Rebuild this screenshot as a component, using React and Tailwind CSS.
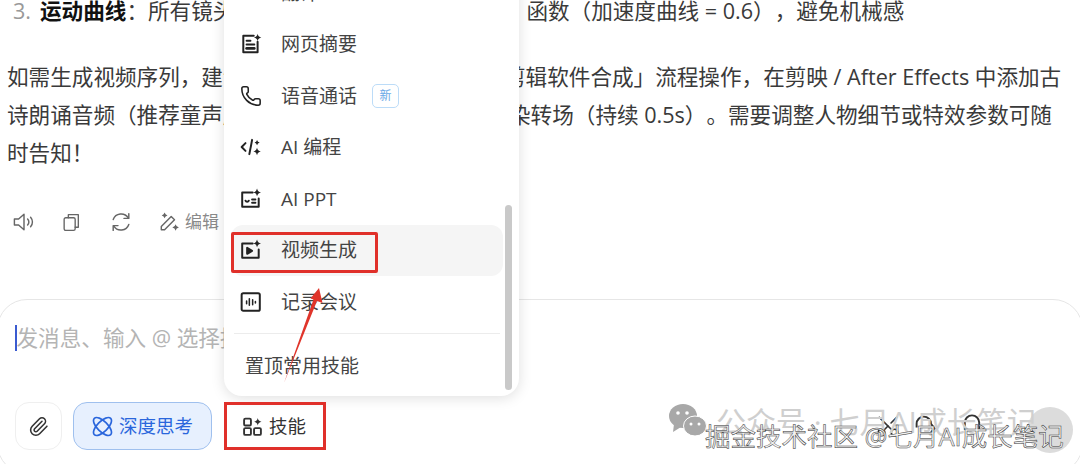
import React from "react";
import { Phone, Paperclip, Scissors } from "lucide-react";

const FONT = "[font-family:'Open_Sans','Noto_Sans_CJK_SC',sans-serif] [text-spacing-trim:space-all]";

const Spark = ({ x, y, s = 3.2 }) => (
  <path
    d={`M${x} ${y - s}Q${x + 0.5} ${y - 0.5} ${x + s} ${y}Q${x + 0.5} ${y + 0.5} ${x} ${y + s}Q${x - 0.5} ${y + 0.5} ${x - s} ${y}Q${x - 0.5} ${y - 0.5} ${x} ${y - s}Z`}
    fill="currentColor"
    stroke="none"
  />
);

const Icon = ({ children, className = "w-[22px] h-[22px]" }) => (
  <svg viewBox="0 0 20 20" fill="none" stroke="currentColor" strokeWidth="1.8" strokeLinecap="round" strokeLinejoin="round" className={className}>
    {children}
  </svg>
);

const PageIcon = () => (
  <Icon>
    <path d="M12.5 2.5H3v15h13V8" />
    <path d="M6 7h3.5M6 10.5h7" />
    <path d="M6 14h7" strokeWidth="2.4" />
    <Spark x={16} y={4} s={3.4} />
  </Icon>
);

const CodeIcon = () => (
  <Icon>
    <path d="M5 6.5 1.5 10 5 13.5" />
    <path d="M11 3.5 8.5 16.5" />
    <Spark x={15.5} y={6} s={2.4} />
    <Spark x={15.5} y={14} s={3.4} />
  </Icon>
);

const PptIcon = () => (
  <Icon>
    <path d="M11.5 4H2v13h15V9.5" />
    <path d="M5 11.5a1.6 1.6 0 0 0 3 0" />
    <path d="M11 10.5h3M11 13.5h3" />
    <Spark x={15.5} y={4} s={3.6} />
  </Icon>
);

const VideoIcon = () => (
  <Icon>
    <path d="M11.5 4H2v13h15V9.5" />
    <path d="M6.5 8v5.5l4.5-2.7z" fill="currentColor" />
    <Spark x={15.5} y={4} s={3.6} />
  </Icon>
);

const MeetingIcon = () => (
  <Icon>
    <rect x="1.5" y="2" width="16.5" height="16" rx="1.5" />
    <path d="M6 9v2.5M8.5 7v6M11.5 8v4.5M14 9.5v1.5" strokeWidth="1.4" />
  </Icon>
);

const TopIcon = () => (
  <Icon>
    <path d="M3 3h4M10 3h4M3 8h14" />
  </Icon>
);

const MENU = [
  { label: "翻译", icon: <TopIcon /> },
  { label: "网页摘要", icon: <PageIcon /> },
  { label: "语音通话", icon: <Phone className="w-[22px] h-[22px]" strokeWidth={1.7} />, isNew: true },
  { label: "AI 编程", icon: <CodeIcon /> },
  { label: "AI PPT", icon: <PptIcon /> },
  { label: "视频生成", icon: <VideoIcon />, active: true },
  { label: "记录会议", icon: <MeetingIcon /> },
];

const SkillMenu = () => (
  <div className="absolute left-[224px] top-[-33px] w-[295px] h-[429px] bg-white rounded-[18px] shadow-[0_2px_14px_rgba(0,0,0,0.13)] pl-[7px] pr-[16px]">
    {MENU.map((item) => (
      <div
        key={item.label}
        className={`flex items-center h-[51.5px] rounded-[12px] ${item.active ? "bg-[#f5f5f5]" : ""}`}
      >
        <span className="w-[50px] pl-[9px] text-[#222] flex items-center shrink-0">{item.icon}</span>
        <span className="text-[19px] text-[#444]">{item.label}</span>
        {item.isNew && (
          <span className="ml-[15px] w-[27px] h-[24px] flex items-center justify-center rounded-[5px] border border-[#bcdcf8] text-[12px] text-[#6aa9e6]">
            新
          </span>
        )}
      </div>
    ))}
    <div className="h-px bg-[#ececec] mt-[5px] mx-[3px]" />
    <div className="text-[19px] text-[#444] pl-[14px] mt-[18px]">置顶常用技能</div>
    <div className="absolute right-[7px] top-[238px] w-[7px] h-[185px] rounded-full bg-[#c9c9c9]" />
  </div>
);

const TextLine = ({ left, right, split = 504 }) => (
  <div className="flex h-[38px] items-center whitespace-nowrap">
    <span className="overflow-hidden shrink-0" style={{ width: split - 7 }}>{left}</span>
    <span>{right}</span>
  </div>
);

const ActionBar = () => (
  <div className="flex items-center h-[24px] mt-[38px] ml-[12px] text-[#666]">
    <Icon className="w-[24px] h-[24px]">
      <path d="M2 7.5h3.5L10 3.5v13l-4.5-4H2z" strokeWidth="1.2" />
      <path d="M13 7.5a3.5 3.5 0 0 1 0 5M15.5 6a6 6 0 0 1 0 8" strokeWidth="1.2" />
    </Icon>
    <Icon className="w-[21px] h-[21px] ml-[25px]">
      <rect x="3" y="5.5" width="10.5" height="12" rx="1.5" strokeWidth="1.3" />
      <path d="M7 5.5V2.5h9.5v12h-3" strokeWidth="1.3" />
    </Icon>
    <Icon className="w-[24px] h-[24px] ml-[27px]">
      <path d="M3.5 8a7 7 0 0 1 12.5-1.5M16.5 12a7 7 0 0 1-12.5 1.5" strokeWidth="1.2" />
      <path d="M16.5 3v4h-4M3.5 17v-4h4" strokeWidth="1.2" />
    </Icon>
    <Icon className="w-[22px] h-[22px] ml-[25px]">
      <path d="M3 14 12 5l3 3-9 9H3z" strokeWidth="1.3" />
      <Spark x={16} y={15} s={3} />
      <Spark x={6} y={4} s={2.6} />
    </Icon>
    <span className="text-[17px] ml-[5px] text-[#8a8a8a]">编辑</span>
  </div>
);

const Composer = () => (
  <div className="mx-[-3px] mt-[65px] h-[175px] rounded-[30px] border border-[#e6e6e6] pl-[17px] pr-[9px] pt-[22px]">
    <div className="flex items-center h-[32px]">
      <span className="w-[1.5px] h-[26px] bg-[#3b5bd0]" />
      <span className="text-[21.6px] text-[#b4b4b4] whitespace-nowrap">发消息、输入 @ 选择技能或 / 选择文件</span>
    </div>
    <div className="flex items-center mt-[48px] h-[48px]">
      <div className="w-[47px] h-[48px] rounded-[14px] border border-[#efefef] flex items-center justify-center text-[#333]">
        <Paperclip className="w-[21px] h-[21px]" strokeWidth={1.8} />
      </div>
      <div className="ml-[11px] w-[139px] h-[48px] rounded-[14px] border border-[#9fc0ee] bg-[#e7f0fe] flex items-center pl-[18px] text-[#2a66dc]">
        <svg viewBox="0 0 20 20" fill="none" stroke="currentColor" strokeWidth="1.6" className="w-[21px] h-[21px] shrink-0">
          <ellipse cx="10" cy="10" rx="11" ry="5" transform="rotate(45 10 10)" />
          <ellipse cx="10" cy="10" rx="11" ry="5" transform="rotate(-45 10 10)" />
        </svg>
        <span className="text-[18.5px] ml-[6px]">深度思考</span>
      </div>
      <div className="ml-[12px] w-[102px] h-[48px] flex items-center pl-[18px] text-[#333]">
        <Icon className="w-[21px] h-[21px] shrink-0">
          <rect x="2" y="2.5" width="6.5" height="6.5" rx="1.2" />
          <rect x="2" y="11.5" width="6.5" height="6.5" rx="1.2" />
          <rect x="11.5" y="11.5" width="6.5" height="6.5" rx="1.2" />
          <Spark x={15} y={5.5} s={3.6} />
        </Icon>
        <span className="text-[18.5px] ml-[6px]">技能</span>
      </div>
      <div className="ml-auto flex items-center text-[#333]">
        <Scissors className="w-[26px] h-[26px] rotate-[-90deg]" strokeWidth={1.5} />
        <svg viewBox="0 0 20 20" fill="none" stroke="currentColor" strokeWidth="1.6" className="w-[24px] h-[24px] ml-[12px] translate-y-[-1px]">
          <path d="M3 12V9a6 6 0 0 1 12 0l3 4-3 3" />
        </svg>
        <svg viewBox="0 0 20 20" fill="none" stroke="currentColor" strokeWidth="1.6" className="w-[24px] h-[24px] ml-[23px] translate-y-[-1px]">
          <path d="M4 14V8a6 6 0 0 1 12 0v6" />
        </svg>
        <span className="w-[46px] h-[46px] ml-[43px] rounded-full bg-[#dcdcdc] translate-y-[4px]" />
      </div>
    </div>
  </div>
);

const Annotations = () => (
  <>
    <div className="absolute left-[231px] top-[232px] w-[147px] h-[41px] border-[3px] border-[#e0302a] rounded-[2px]" />
    <div className="absolute left-[224px] top-[402px] w-[102px] h-[48px] border-[3px] border-[#e0302a]" />
    <svg className="absolute left-[275px] top-[280px] w-[55px] h-[110px]" viewBox="0 0 55 110">
      <path d="M44 8 47.5 23 42 21 9 103 38.5 19.5 35.5 18.5Z" fill="#e0352b" />
    </svg>
  </>
);

const Watermark = () => (
  <>
    <svg className="absolute left-[668px] top-[403px] w-[42px] h-[36px]" viewBox="0 0 42 36">
      <ellipse cx="15" cy="13" rx="14" ry="12" fill="#a8a8a8" />
      <path d="M6 21 5 29 13 24Z" fill="#a8a8a8" />
      <ellipse cx="27" cy="23" rx="11.5" ry="10" fill="#a8a8a8" stroke="#fff" strokeWidth="1" />
      <circle cx="10" cy="10" r="1.8" fill="#fff" />
      <circle cx="19" cy="10" r="1.8" fill="#fff" />
      <circle cx="23" cy="21" r="1.5" fill="#fff" />
      <circle cx="31" cy="21" r="1.5" fill="#fff" />
    </svg>
    <div className="absolute left-[716px] top-[400px] text-[30px] leading-[44px] text-[#cfcfcf] whitespace-nowrap">
      公众号 · 七月AI成长笔记
    </div>
    <div className="absolute left-[705px] top-[418px] text-[25.5px] leading-[36px] text-[#f2f2f2] [-webkit-text-stroke:0.5px_#333] whitespace-nowrap">
      掘金技术社区 @七月AI成长笔记
    </div>
  </>
);

export default function App() {
  return (
    <div className={`relative w-[1080px] h-[464px] overflow-hidden bg-white ${FONT}`}>
      <div className="text-[21.6px] text-[#3a3a3a]">
        <div className="flex h-[22px] items-center whitespace-nowrap">
          <span className="w-[40px] pl-[13px] text-[#999] shrink-0">3.</span>
          <span className="font-bold text-[#111]">运动曲线</span>
          <span className="w-[400px] overflow-hidden shrink-0">：所有镜头的运动都使用缓动曲线</span>
          <span>函数（加速度曲线 = 0.6），避免机械感</span>
        </div>
        <div className="pl-[7px] mt-[36px]">
          <TextLine left="如需生成视频序列，建议按「分镜脚本生成" right="剪辑软件合成」流程操作，在剪映 / After Effects 中添加古" />
          <TextLine split={509} left="诗朗诵音频（推荐童声版本，并加入水墨晕" right="染转场（持续 0.5s）。需要调整人物细节或特效参数可随" />
          <TextLine left="时告知！" right="" />
        </div>
      </div>
      <ActionBar />
      <Composer />
      <SkillMenu />
      <Watermark />
      <Annotations />
    </div>
  );
}
